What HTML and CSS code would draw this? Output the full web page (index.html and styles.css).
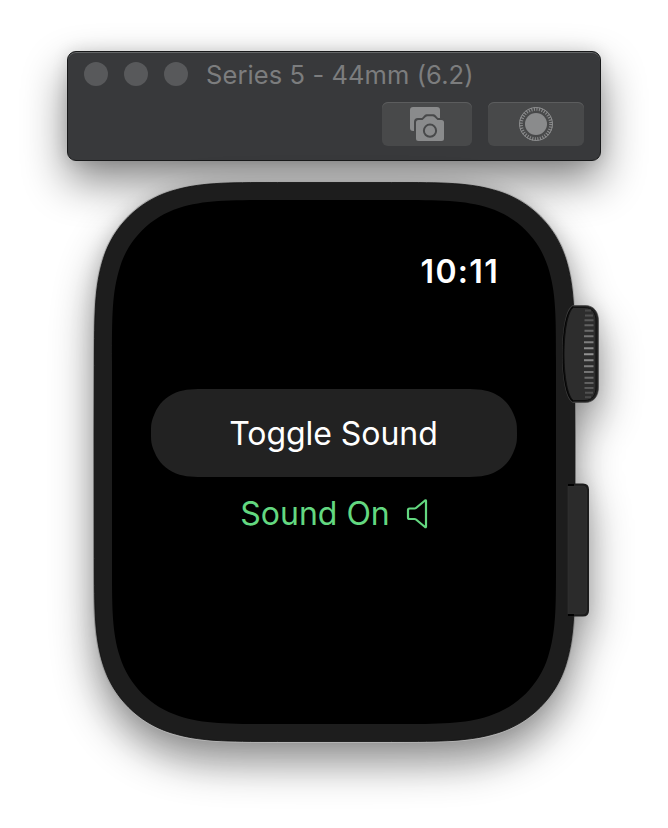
FILE: index.html
```html
<!DOCTYPE html>
<html lang="en">
<head>
<meta charset="utf-8">
<title>Series 5 - 44mm (6.2)</title>
<link rel="stylesheet" href="styles.css">
</head>
<body>
<main class="simulator">
  <header class="toolbar">
    <div class="titlebar">
      <span class="light"></span><span class="light"></span><span class="light"></span>
      <h1 class="title">Series 5 - 44mm (6.2)</h1>
    </div>
    <div class="actions">
      <button class="action screenshot" aria-label="Screenshot">
        <svg width="36" height="36" viewBox="0 0 36 36">
          <rect x="1" y="1" width="30" height="24" rx="3" fill="#8a8b8c"/>
          <path class="camera" d="M10 12H13L16 8.8Q16.6 8.2 17.5 8.2H24.5Q25.4 8.2 26 8.800L29 12H32Q36 12 36 16V31.500Q36 35.500 32 35.500H9Q5 35.500 5 31.500V16Q5 12 9 12Z" fill="#48494a"/>
          <path d="M9.500 14H13.500L17 10.800Q17.700 10.200 18.500 10.200H23.500Q24.300 10.200 25 10.800L28.500 14H32.500Q35 14 35 16.500V32.500Q35 35 32.500 35H9.500Q7 35 7 32.500V16.500Q7 14 9.500 14Z" fill="#8a8b8c"/>
          <circle cx="21" cy="24.700" r="6.100" fill="none" stroke="#48494a" stroke-width="2"/>
        </svg>
      </button>
      <button class="action crown-press" aria-label="Digital Crown">
        <svg width="36" height="36" viewBox="0 0 36 36">
          <circle cx="18" cy="18" r="11" fill="#8a8b8c"/>
          <circle cx="18" cy="18" r="16.500" fill="none" stroke="#8a8b8c" stroke-width="1"/>
          <circle cx="18" cy="18" r="15" fill="none" stroke="#8a8b8c" stroke-width="3.600" stroke-dasharray="1.100 1.518"/>
        </svg>
      </button>
    </div>
  </header>

  <section class="watch">
    <svg class="case" width="534" height="580" viewBox="67 171 534 580">
      <defs>
        <linearGradient id="rim" x1="0" y1="0" x2="0" y2="1">
          <stop offset="0" stop-color="#a8a8a8"/><stop offset=".2" stop-color="#aaa"/>
          <stop offset=".45" stop-color="#747474"/><stop offset=".75" stop-color="#888"/>
          <stop offset="1" stop-color="#b4b4b4"/>
        </linearGradient>
        <linearGradient id="ridges" x1="0" y1="308" x2="0" y2="400" gradientUnits="userSpaceOnUse">
          <stop offset="0" stop-color="#444"/><stop offset=".5" stop-color="#929292"/><stop offset="1" stop-color="#444"/>
        </linearGradient>
        <path id="body" d="M94.500 365.500c0-52.400 0-78.800 9-107.300c10-31.700 35-56.700 66.700-66.700c28.500-9 54.900-9 107.300-9h114c52.400 0 78.800 0 107.300 9c31.700 10 56.700 35 66.700 66.700c9 28.500 9 54.900 9 107.300v193c0 52.400 0 78.800-9 107.300c-10 31.700-35 56.700-66.700 66.700c-28.500 9-54.900 9-107.300 9h-114c-52.400 0-78.800 0-107.300-9c-31.700-10-56.700-35-66.700-66.700c-9-28.500-9-54.900-9-107.300Z"/>
      </defs>
      <use href="#body" fill="#1d1d1d" stroke="url(#rim)" stroke-width="3"/>
      <use href="#body" fill="#1d1d1d" stroke="#101010" stroke-width=".8"/>
      <path d="M112 361.700c0-46.300 0-69.600 8-94.800c8.800-28 30.900-50.100 58.900-58.900c25.200-8 48.500-8 94.800-8h120.600c46.300 0 69.600 0 94.800 8c28 8.800 50.100 30.900 58.900 58.900c8 25.200 8 48.500 8 94.800v200.600c0 46.300 0 69.600-8 94.800c-8.800 28-30.900 50.100-58.900 58.900c-25.200 8-48.500 8-94.800 8h-120.600c-46.300 0-69.600 0-94.800-8c-28-8.800-50.100-30.900-58.900-58.900c-8-25.200-8-48.500-8-94.800Z" fill="#000"/>
      <path d="M573 305.500H585C594 305.500 598.500 312 598.500 321V387C598.500 396 594 402.500 585 402.500H573C566 400 562.500 377 562.500 354C562.500 331 566 308 573 305.500Z" fill="#222" stroke="#4a4a4a" stroke-width=".7"/>
      <path d="M573.500 307C566.500 311 563.500 332 563.500 354C563.500 376 566.500 397 573.500 401" fill="none" stroke="#050505" stroke-width="2"/>
      <path d="M573.500 307.500C567.500 311 564 332 564 354C564 376 567.500 397 573.500 400.500H585C592 400.500 596 395 596 387V321C596 313 592 307.500 585 307.500Z" fill="#2d2d2d" stroke="#101010" stroke-width="1"/>
      <path d="M585 310.500H591M585 315.500H593M584.500 320.300H593.500M584.500 325.300H593.500M584.500 330.700H593.500M584 336.300H593.500M584 342.200H593.500M584 348.200H593.500M584 354.200H593.500M584 360.200H593.500M584 366.200H593.500M584 372H593.500M584.500 377.700H593.500M584.500 383H593.500M584.500 388H593.500M585 392.700H593M585 397.200H591" fill="none" stroke="url(#ridges)" stroke-width="2"/>
      <path d="M568 483.500H583Q589 483.500 589 489.500V610.500Q589 616.500 583 616.500H568Z" fill="#1c1c1c"/>
      <path d="M568 486H583Q586.500 486 586.500 490V610Q586.500 614 583 614H568Z" fill="#2b2b2b" stroke="#343434" stroke-width=".6"/>
      <path d="M568 485H574M568 615H574" stroke="#000" stroke-width="2"/>
    </svg>
    <div class="screen">
      <time class="clock">10:11</time>
      <button class="toggle">
        <svg class="toggle-shape" viewBox="0 0 366 88" width="366" height="88"><path d="M0 44C0 36 0 33 3.500 25C7.500 15 15 7.500 25 3.500C35 0 42 0 57 0H309C324 0 331 0 341 3.500C351 7.500 358.500 15 362.500 25C366 33 366 36 366 44C366 52 366 55 362.500 63C358.500 73 351 80.500 341 84.500C331 88 324 88 309 88H57C42 88 35 88 25 84.500C15 80.500 7.500 73 3.500 63C0 55 0 52 0 44Z" fill="#222"/></svg>
        <span class="toggle-label">Toggle Sound</span>
      </button>
      <p class="status">
        <span class="status-label">Sound On</span>
        <svg width="22" height="32" viewBox="0 0 22 32"><path d="M2 12Q2 10.500 3.500 10.500H8.500Q9.400 10.500 10 10L19 2.500Q20 1.800 20 3V28.500Q20 29.700 19 29L10 21.500Q9.400 21 8.500 21H3.500Q2 21 2 19.500Z" fill="none" stroke="#63d880" stroke-width="2.200"/></svg>
      </p>
    </div>
  </section>
</main>
</body>
</html>
```
FILE: styles.css
```css
* { box-sizing: border-box; }

body {
  margin: 0;
  background: #fff;
  font-family: Inter, "Liberation Sans", sans-serif;
}

.simulator {
  width: 668px;
  height: 828px;
  padding: 51px 67px 0;
  overflow: hidden;
}

button {
  border: 0;
  padding: 0;
  font: inherit;
}

.toolbar {
  height: 110px;
  padding: 9px 17px 0 16px;
  border: 1px solid #18191a;
  border-radius: 9px;
  background: #38393b;
  box-shadow: inset 0 1px 0 #656768, 0 20px 44px rgba(0, 0, 0, .48), 0 0 16px rgba(0, 0, 0, .12);
}

.titlebar {
  display: flex;
  align-items: center;
  height: 26px;
}

.light {
  width: 24px;
  height: 24px;
  margin-right: 16px;
  border-radius: 50%;
  background: #58595b;
}

.title {
  margin: 2px 0 0 2px;
  font-size: 25.5px;
  font-weight: 400;
  letter-spacing: .09px;
  line-height: 26px;
  white-space: nowrap;
  color: #7c7d7e;
}

.actions {
  display: flex;
  justify-content: flex-end;
  gap: 16px;
  margin: 15px -1px 0 0;
}

.action {
  display: flex;
  align-items: center;
  justify-content: center;
  height: 44px;
  border-radius: 6px;
  background: #48494a;
  box-shadow: inset 0 1px 0 #5c5d5e;
}

.screenshot { width: 90px; }
.crown-press { width: 96px; }

.watch {
  position: relative;
  height: 580px;
  margin-top: 10px;
}

.case {
  display: block;
  overflow: visible;
  filter: drop-shadow(0 20px 21px rgba(0, 0, 0, .42)) drop-shadow(0 0 8px rgba(0, 0, 0, .1));
}

.screen {
  position: absolute;
  top: 29px;
  left: 45px;
  display: flex;
  flex-direction: column;
  align-items: center;
  width: 444px;
  height: 524px;
  padding-top: 52px;
}

.clock {
  align-self: flex-end;
  margin-right: 57px;
  font-size: 32px;
  font-weight: 600;
  letter-spacing: 1.3px;
  line-height: 40px;
  color: #fff;
}

.toggle {
  display: grid;
  place-items: center;
  width: 366px;
  height: 88px;
  margin-top: 97px;
  background: none;
  color: #fff;
}

.toggle-shape, .toggle-label { grid-area: 1 / 1; }

.toggle-label {
  padding: 2px 1px 0 0;
  font-size: 32px;
  letter-spacing: -.05px;
  line-height: 40px;
}

.status {
  display: flex;
  align-items: center;
  gap: 16px;
  margin: 17px 0 0;
  color: #63d880;
  font-size: 32px;
  line-height: 40px;
}
```
